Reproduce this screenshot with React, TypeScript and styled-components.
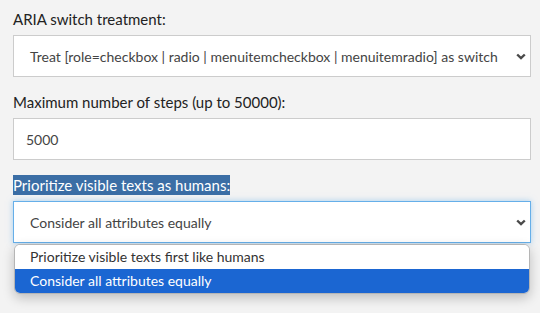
import { FC } from 'react'
import styled, { createGlobalStyle } from 'styled-components'

const GlobalStyle = createGlobalStyle`
  body {
    margin: 0;
    background: #f3f3f3;
    font-family: Lato, "Open Sans", sans-serif;
  }
`
const Page = styled.div`
  display: flex;
  flex-direction: column;
  box-sizing: border-box;
  min-height: 313px;
  padding: 9px 9px 0 13px;
`
const Group = styled.div`
  position: relative;
  display: flex;
  flex-direction: column;
  gap: 6px;
  margin-bottom: 15px;
`
const Label = styled.label`
  height: 20px;
  font-size: 15px;
  line-height: 20px;
  color: #222;
`
const Selected = styled.span`
  display: inline-block;
  background: #3b6ea5;
  color: #fff;
`
const Box = styled.div<{ $focused?: boolean }>`
  display: flex;
  align-items: center;
  box-sizing: border-box;
  height: 42px;
  background: #fff;
  border: 1px solid ${p => (p.$focused ? '#66afe9' : '#ccc')};
  box-shadow: ${p => (p.$focused ? '0 0 6px rgba(102, 175, 233, 0.55)' : 'none')};
  font-size: 14px;
  color: #444;
`
const SelectText = styled.span`
  flex: 1;
  padding-left: 16px;
  white-space: nowrap;
`
const InputText = styled.span`
  padding-left: 12px;
`
const Chevron = styled.svg`
  width: 10px;
  height: 7px;
  margin-right: 4px;
`
const Menu = styled.ul`
  position: absolute;
  top: calc(100% + 1px);
  left: 1px;
  right: 1px;
  margin: 0;
  padding: 0;
  list-style: none;
  background: #fff;
  border: 1px solid #b5b5b5;
  border-radius: 6px;
  overflow: hidden;
  box-shadow: 0 4px 12px rgba(0, 0, 0, 0.22);
`
const Option = styled.li<{ $active?: boolean }>`
  height: 24px;
  line-height: 24px;
  padding-left: 15px;
  font-size: 14px;
  background: ${p => (p.$active ? '#1b66d2' : '#fff')};
  color: ${p => (p.$active ? '#fff' : '#333')};
`

const Arrow: FC = () => (
  <Chevron viewBox="0 0 10 7">
    <path d="M1.2 1.5l3.8 3.6 3.8-3.6" fill="none" stroke="#4a4a4a" strokeWidth="2.4" />
  </Chevron>
)

const App: FC = () => (
  <Page>
    <GlobalStyle />
    <Group>
      <Label>ARIA switch treatment:</Label>
      <Box>
        <SelectText>
          Treat [role=checkbox | radio | menuitemcheckbox | menuitemradio] as switch
        </SelectText>
        <Arrow />
      </Box>
    </Group>
    <Group>
      <Label>Maximum number of steps (up to 50000):</Label>
      <Box>
        <InputText>5000</InputText>
      </Box>
    </Group>
    <Group>
      <Label><Selected>Prioritize visible texts as humans:</Selected></Label>
      <Box $focused>
        <SelectText>Consider all attributes equally</SelectText>
        <Arrow />
      </Box>
      <Menu>
        <Option>Prioritize visible texts first like humans</Option>
        <Option $active>Consider all attributes equally</Option>
      </Menu>
    </Group>
  </Page>
)

export default App
